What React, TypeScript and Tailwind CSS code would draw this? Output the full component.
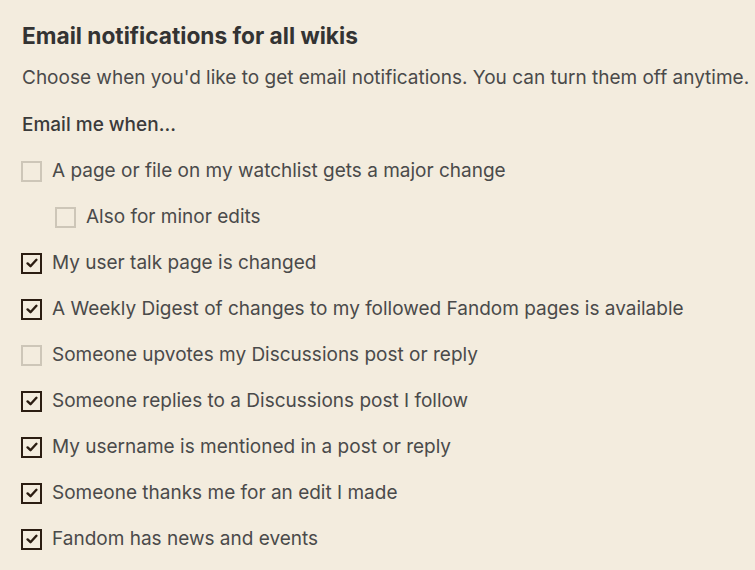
import React from "react";

type Pref = { label: string; checked: boolean; nested?: boolean };

const prefs: Pref[] = [
  { label: "A page or file on my watchlist gets a major change", checked: false },
  { label: "Also for minor edits", checked: false, nested: true },
  { label: "My user talk page is changed", checked: true },
  { label: "A Weekly Digest of changes to my followed Fandom pages is available", checked: true },
  { label: "Someone upvotes my Discussions post or reply", checked: false },
  { label: "Someone replies to a Discussions post I follow", checked: true },
  { label: "My username is mentioned in a post or reply", checked: true },
  { label: "Someone thanks me for an edit I made", checked: true },
  { label: "Fandom has news and events", checked: true },
];

function Box({ checked }: { checked: boolean }) {
  if (!checked) {
    return <span className="block w-[21px] h-[21px] shrink-0 border-2 border-[#cdc6b8] bg-[#f3ecde]" />;
  }
  return (
    <span className="flex items-center justify-center w-[21px] h-[21px] shrink-0 border-2 border-[#2b1d12] bg-[#f3ecde]">
      <svg width="12" height="10" viewBox="0 0 12 10" fill="none">
        <path d="M1.6 5.4 L4.5 8.2 L10.4 1.8" stroke="#2b1d12" strokeWidth="2.4" strokeLinecap="round" strokeLinejoin="round" />
      </svg>
    </span>
  );
}

export default function App() {
  return (
    <div
      className="w-[755px] h-[570px] overflow-hidden bg-[#f3ecde] text-[#3d3d3d] pl-[22px] pt-[22px]"
      style={{ fontFamily: "Inter, 'Open Sans', sans-serif" }}
    >
      <h2 className="text-[22.7px] font-bold text-[#333] leading-[28px] whitespace-nowrap">Email notifications for all wikis</h2>
      <p className="mt-[14px] text-[19px] leading-[28px] whitespace-nowrap text-[#4a4a4a]">
        Choose when you'd like to get email notifications. You can turn them off anytime.
      </p>
      <p className="mt-[19px] text-[19px] font-medium leading-[28px] text-[#3a3a3a]">Email me when...</p>
      <ul className="mt-[18px] flex flex-col gap-[18px]">
        {prefs.map((p) => (
          <li
            key={p.label}
            className={`flex items-center h-[28px] gap-[10px] -ml-[1px] ${p.nested ? "pl-[34px]" : ""}`}
          >
            <Box checked={p.checked} />
            <span className="text-[19px] leading-[28px] whitespace-nowrap text-[#4a4a4a]">{p.label}</span>
          </li>
        ))}
      </ul>
    </div>
  );
}
